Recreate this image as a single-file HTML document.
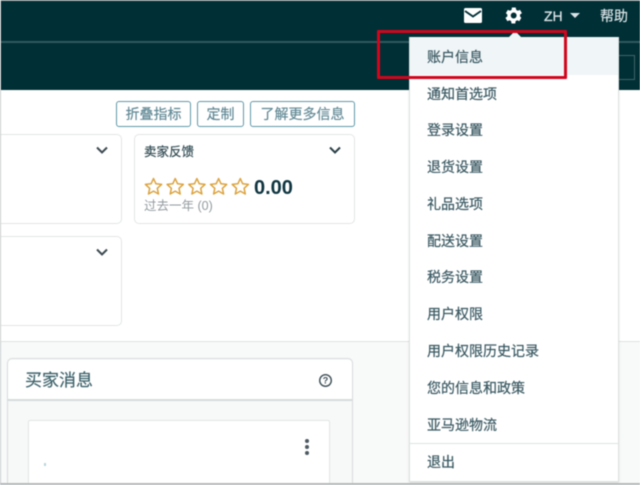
<!DOCTYPE html>
<html lang="zh">
<head>
<meta charset="utf-8">
<title>账户信息</title>
<style>
html,body{margin:0;padding:0;background:#fff}
body{width:640px;height:485px;overflow:hidden;position:relative;font-family:"Liberation Sans","Noto Sans CJK SC",sans-serif}
#p{position:absolute;left:0;top:0;width:640px;height:485px;overflow:hidden;filter:blur(.5px)}
.a{position:absolute}
.btn{position:absolute;top:101px;height:24px;border:1px solid #5f97a8;border-radius:3px;background:#fff;color:#5f8793;font-size:14px;line-height:24px;text-align:center;box-sizing:content-box;-webkit-text-stroke:.15px #5f8793}
.card{position:absolute;background:#fff;border:1px solid #e3e6e6;border-radius:5px;box-sizing:border-box}
.mi{position:absolute;left:427px;font-size:14px;line-height:20px;color:#3a5962;white-space:nowrap;-webkit-text-stroke:.2px #3a5962}
</style>
</head>
<body>
<div id="p">
  <div class="a" style="left:0;top:0;width:640px;height:90px;background:#002f36"></div>
  <div class="a" style="left:0;top:0;width:640px;height:1px;background:#8f9a9c"></div>
  <div class="a" style="left:0;top:41px;width:640px;height:2px;background:#2f5a5f"></div>

  <svg class="a" style="left:463px;top:8px" width="20" height="15" viewBox="0 0 20 15"><rect x="1" y="0" width="18" height="15" rx="1.5" fill="#fff"/><path d="M2 3l8 5.5L18 3" fill="none" stroke="#002f36" stroke-width="1.8"/></svg>
  <svg class="a" style="left:503px;top:5px" width="21" height="21" viewBox="0 0 24 24"><path fill="#fff" d="M19.4 13a7.6 7.6 0 0 0 0-2l2.2-1.7-2.2-3.7-2.6 1a7.7 7.7 0 0 0-1.700-1L14.500 2.900h-4.300l-.4 2.700a7.700 7.700 0 0 0-1.700 1l-2.600-1-2.200 3.700L5 11a7.600 7.600 0 0 0 0 2l-2.200 1.700 2.200 3.700 2.600-1a7.700 7.700 0 0 0 1.700 1l.4 2.700h4.300l.4-2.700a7.700 7.700 0 0 0 1.700-1l2.600 1 2.200-3.700zM12.200 15.400a3.400 3.400 0 1 1 0-6.800 3.400 3.400 0 0 1 0 6.800z"/></svg>
  <div class="a" style="left:544px;top:7px;font-size:14px;line-height:18px;color:#dbe4e6;-webkit-text-stroke:.3px #dbe4e6">ZH</div>
  <div class="a" style="left:570px;top:13px;width:0;height:0;border-left:5px solid transparent;border-right:5px solid transparent;border-top:5px solid #dbe4e6"></div>
  <div class="a" style="left:600px;top:6px;font-size:14px;line-height:20px;color:#dbe4e6;-webkit-text-stroke:.2px #dbe4e6">帮助</div>

  <div class="a" style="left:560px;top:55px;width:73px;height:23px;border:1px solid #3f6468"></div>

  <div class="btn" style="left:116px;width:73px">折叠指标</div>
  <div class="btn" style="left:197px;width:45px">定制</div>
  <div class="btn" style="left:250px;width:103px">了解更多信息</div>

  <div class="card" style="left:-8px;top:134px;width:130px;height:90px"></div>
  <svg class="a" style="left:96px;top:146px" width="12" height="9" viewBox="0 0 12 9"><path d="M1 1.500l5 5 5-5" fill="none" stroke="#3d4a50" stroke-width="2"/></svg>

  <div class="card" style="left:134px;top:134px;width:221px;height:90px"></div>
  <div class="a" style="left:144px;top:143px;font-size:12.500px;line-height:18px;color:#2f4a52;-webkit-text-stroke:.2px #2f4a52">卖家反馈</div>
  <svg class="a" style="left:329px;top:146px" width="12" height="9" viewBox="0 0 12 9"><path d="M1 1.500l5 5 5-5" fill="none" stroke="#2a3e46" stroke-width="2"/></svg>

  <svg class="a" style="left:144px;top:177px" width="106" height="20" viewBox="0 0 106 20">
    <g fill="#fff" stroke="#dba33e" stroke-width="1.500" stroke-linejoin="round">
      <path d="M9.500 1.500l2.400 5.300 5.700.6-4.300 3.900 1.200 5.700-5-2.900-5 2.900 1.200-5.700L1.400 7.400l5.700-.6z"/>
      <path transform="translate(21.700 0)" d="M9.500 1.500l2.400 5.300 5.700.6-4.300 3.900 1.200 5.700-5-2.900-5 2.900 1.200-5.700L1.400 7.400l5.700-.6z"/>
      <path transform="translate(43.400 0)" d="M9.500 1.500l2.400 5.300 5.700.6-4.300 3.900 1.200 5.700-5-2.900-5 2.900 1.200-5.700L1.400 7.400l5.700-.6z"/>
      <path transform="translate(65.100 0)" d="M9.500 1.500l2.400 5.300 5.700.6-4.300 3.900 1.200 5.700-5-2.900-5 2.900 1.200-5.700L1.400 7.400l5.700-.6z"/>
      <path transform="translate(86.800 0)" d="M9.500 1.500l2.400 5.300 5.700.6-4.300 3.900 1.200 5.700-5-2.900-5 2.900 1.200-5.700L1.400 7.400l5.700-.6z"/>
    </g>
  </svg>
  <div class="a" style="left:254px;top:176px;font-size:20px;font-weight:bold;line-height:24px;color:#0f3540">0.00</div>
  <div class="a" style="left:144px;top:198px;font-size:12.500px;line-height:17px;color:#929a9e">过去一年 (0)</div>

  <div class="card" style="left:-8px;top:236px;width:130px;height:90px"></div>
  <svg class="a" style="left:96px;top:248px" width="12" height="9" viewBox="0 0 12 9"><path d="M1 1.500l5 5 5-5" fill="none" stroke="#3d4a50" stroke-width="2"/></svg>

  <div class="a" style="left:0;top:341px;width:640px;height:144px;background:#f8f9f9;border-top:1px solid #e0e3e3;box-sizing:border-box"></div>
  <div class="a" style="left:7px;top:358px;width:346px;height:127px;background:#f7f8f8;border:1.500px solid #d8dbdc;border-bottom:0;border-radius:5px 5px 0 0;box-sizing:border-box"></div>
  <div class="a" style="left:8px;top:360px;width:344px;height:39px;background:#fff;border-bottom:2px solid #d8dbdc;border-radius:4px 4px 0 0"></div>
  <div class="a" style="left:25px;top:370px;font-size:17px;line-height:22px;color:#3a5f68;-webkit-text-stroke:.15px #3a5f68">买家消息</div>
  <svg class="a" style="left:318px;top:373px" width="15" height="15" viewBox="0 0 15 15"><circle cx="7.500" cy="7.500" r="5.800" fill="#fff" stroke="#3e4f57" stroke-width="1.400"/><text x="7.500" y="10.600" text-anchor="middle" font-family="Liberation Sans" font-size="9" font-weight="bold" fill="#3e4f57">?</text></svg>
  <div class="a" style="left:28px;top:420px;width:302px;height:65px;background:#fff;border:1px solid #e3e6e6;border-bottom:0;border-radius:2px 2px 0 0;box-sizing:border-box"></div>
  <div class="a" style="left:305px;top:439px;width:4px;height:4px;border-radius:50%;background:#4d5a62"></div>
  <div class="a" style="left:305px;top:445px;width:4px;height:4px;border-radius:50%;background:#4d5a62"></div>
  <div class="a" style="left:305px;top:451px;width:4px;height:4px;border-radius:50%;background:#4d5a62"></div>
  <div class="a" style="left:44px;top:463px;width:2px;height:3px;background:#b8d4dc"></div>

  <div class="a" style="left:409px;top:37px;width:210px;height:445px;background:#fff;border:1px solid #dfe2e2;box-sizing:border-box;box-shadow:0 1px 2px rgba(0,0,0,.12)"></div>
  <div class="a" style="left:410px;top:37px;width:208px;height:38px;background:#f0f5f7"></div>
  <div class="a" style="left:508px;top:31px;width:0;height:0;border-left:7px solid transparent;border-right:7px solid transparent;border-bottom:7px solid #f0f5f7"></div>

  <div class="mi" style="top:47px">账户信息</div>
  <div class="mi" style="top:84px">通知首选项</div>
  <div class="mi" style="top:120px">登录设置</div>
  <div class="mi" style="top:157px">退货设置</div>
  <div class="mi" style="top:194px">礼品选项</div>
  <div class="mi" style="top:231px">配送设置</div>
  <div class="mi" style="top:267px">税务设置</div>
  <div class="mi" style="top:304px">用户权限</div>
  <div class="mi" style="top:341px">用户权限历史记录</div>
  <div class="mi" style="top:378px">您的信息和政策</div>
  <div class="mi" style="top:415px">亚马逊物流</div>
  <div class="a" style="left:410px;top:443px;width:208px;height:1px;background:#dfe2e2"></div>
  <div class="mi" style="top:452px">退出</div>

  <div class="a" style="left:377px;top:30px;width:190px;height:49px;border:3px solid #d3051c;box-sizing:border-box;border-radius:1px"></div>

  <div class="a" style="left:0;top:0;width:1px;height:485px;background:#c8cccc"></div>
  <div class="a" style="left:0;top:483px;width:640px;height:2px;background:#b5b9ba"></div>
</div>
</body>
</html>
